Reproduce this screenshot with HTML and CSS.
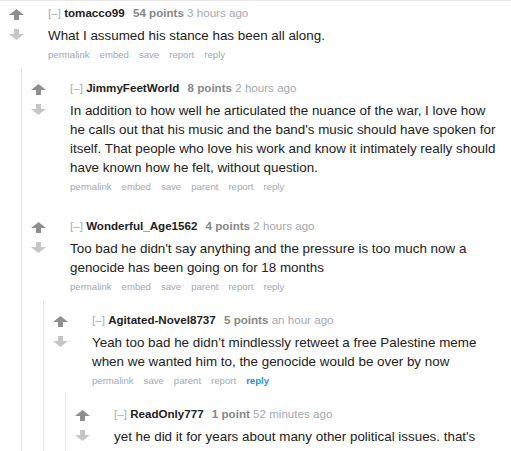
FILE: index.html
```html
<!DOCTYPE html>
<html>
<head>
<meta charset="utf-8">
<link rel="stylesheet" href="styles.css">
</head>
<body>
<div class="thread">
  <div class="comment top">
    <div class="vote">
      <svg class="arrow up" viewBox="0 0 15 11" width="15" height="11"><polygon points="7.5,0 15,6 10,6 10,11 5,11 5,6 0,6"/></svg>
      <svg class="arrow down" viewBox="0 0 15 11" width="15" height="11"><polygon points="7.5,11 15,5 10,5 10,0 5,0 5,5 0,5"/></svg>
    </div>
    <div class="entry">
      <div class="tagline"><span class="toggle">[–]</span> <span class="author">tomacco99</span> <span class="score">54 points</span> <span class="time">3 hours ago</span></div>
      <div class="body">What I assumed his stance has been all along.</div>
      <ul class="actions"><li>permalink</li><li>embed</li><li>save</li><li>report</li><li>reply</li></ul>
    </div>
  </div>
  <div class="children">
    <div class="comment">
      <div class="vote">
        <svg class="arrow up" viewBox="0 0 15 11" width="15" height="11"><polygon points="7.5,0 15,6 10,6 10,11 5,11 5,6 0,6"/></svg>
        <svg class="arrow down" viewBox="0 0 15 11" width="15" height="11"><polygon points="7.5,11 15,5 10,5 10,0 5,0 5,5 0,5"/></svg>
      </div>
      <div class="entry">
        <div class="tagline"><span class="toggle">[–]</span> <span class="author">JimmyFeetWorld</span> <span class="score">8 points</span> <span class="time">2 hours ago</span></div>
        <div class="body">In addition to how well he articulated the nuance of the war, I love how he calls out that his music and the band's music should have spoken for itself. That people who love his work and know it intimately really should have known how he felt, without question.</div>
        <ul class="actions"><li>permalink</li><li>embed</li><li>save</li><li>parent</li><li>report</li><li>reply</li></ul>
      </div>
    </div>
    <div class="comment sibling">
      <div class="vote">
        <svg class="arrow up" viewBox="0 0 15 11" width="15" height="11"><polygon points="7.5,0 15,6 10,6 10,11 5,11 5,6 0,6"/></svg>
        <svg class="arrow down" viewBox="0 0 15 11" width="15" height="11"><polygon points="7.5,11 15,5 10,5 10,0 5,0 5,5 0,5"/></svg>
      </div>
      <div class="entry">
        <div class="tagline"><span class="toggle">[–]</span> <span class="author">Wonderful_Age1562</span> <span class="score">4 points</span> <span class="time">2 hours ago</span></div>
        <div class="body">Too bad he didn't say anything and the pressure is too much now a genocide has been going on for 18 months</div>
        <ul class="actions"><li>permalink</li><li>embed</li><li>save</li><li>parent</li><li>report</li><li>reply</li></ul>
      </div>
    </div>
    <div class="children">
      <div class="comment">
        <div class="vote">
          <svg class="arrow up" viewBox="0 0 15 11" width="15" height="11"><polygon points="7.5,0 15,6 10,6 10,11 5,11 5,6 0,6"/></svg>
          <svg class="arrow down" viewBox="0 0 15 11" width="15" height="11"><polygon points="7.5,11 15,5 10,5 10,0 5,0 5,5 0,5"/></svg>
        </div>
        <div class="entry">
          <div class="tagline"><span class="toggle">[–]</span> <span class="author">Agitated-Novel8737</span> <span class="score">5 points</span> <span class="time">an hour ago</span></div>
          <div class="body">Yeah too bad he didn’t mindlessly retweet a free Palestine meme when we wanted him to, the genocide would be over by now</div>
          <ul class="actions"><li>permalink</li><li>save</li><li>parent</li><li>report</li><li class="active">reply</li></ul>
        </div>
      </div>
      <div class="children">
        <div class="comment">
          <div class="vote">
            <svg class="arrow up" viewBox="0 0 15 11" width="15" height="11"><polygon points="7.5,0 15,6 10,6 10,11 5,11 5,6 0,6"/></svg>
            <svg class="arrow down" viewBox="0 0 15 11" width="15" height="11"><polygon points="7.5,11 15,5 10,5 10,0 5,0 5,5 0,5"/></svg>
          </div>
          <div class="entry">
            <div class="tagline"><span class="toggle">[–]</span> <span class="author">ReadOnly777</span> <span class="score">1 point</span> <span class="time">52 minutes ago</span></div>
            <div class="body">yet he did it for years about many other political issues. that's what he is being called out for, not a meme</div>
          </div>
        </div>
      </div>
    </div>
  </div>
</div>
</body>
</html>
```

FILE: styles.css
```css
html, body {
  margin: 0;
  padding: 0;
  background: #ffffff;
  overflow: hidden;
}
body {
  font-family: "Liberation Sans", Arial, sans-serif;
  color: #222222;
}
.thread {
  border-top: 1px solid #e6e6e6;
  padding-right: 11px;
}
.comment {
  display: flex;
  padding-top: 3px;
}
.comment.sibling {
  padding-top: 23px;
}
.vote {
  width: 32px;
  flex: none;
  display: flex;
  flex-direction: column;
  align-items: center;
  padding-top: 5px;
  gap: 9px;
}
.arrow {
  display: block;
}
.arrow.up polygon {
  fill: #8f8f8f;
}
.arrow.down polygon {
  fill: #c6c6c6;
}
.entry {
  margin-left: 16px;
  flex: 1;
  min-width: 0;
}
.tagline {
  font-size: 11.6px;
  line-height: 18px;
  color: #888888;
}
.toggle {
  color: #a7afb9;
}
.author {
  font-weight: bold;
  color: #222222;
  margin-right: 5px;
}
.score {
  font-weight: bold;
  color: #888888;
}
.time {
  color: #a3a9b0;
}
.body {
  font-size: 13.4px;
  line-height: 19px;
  margin-top: 4px;
  color: #222222;
}
.actions {
  list-style: none;
  margin: 3px 0 0;
  padding: 0;
  display: flex;
  gap: 10px;
  font-size: 9.6px;
  line-height: 14px;
  color: #a2a9b2;
}
.actions .active {
  color: #1e8fe8;
  font-weight: bold;
}
.children {
  margin-left: 21px;
  margin-top: 6px;
  border-left: 1px solid #e8e8e8;
  padding-top: 8px;
}
```
